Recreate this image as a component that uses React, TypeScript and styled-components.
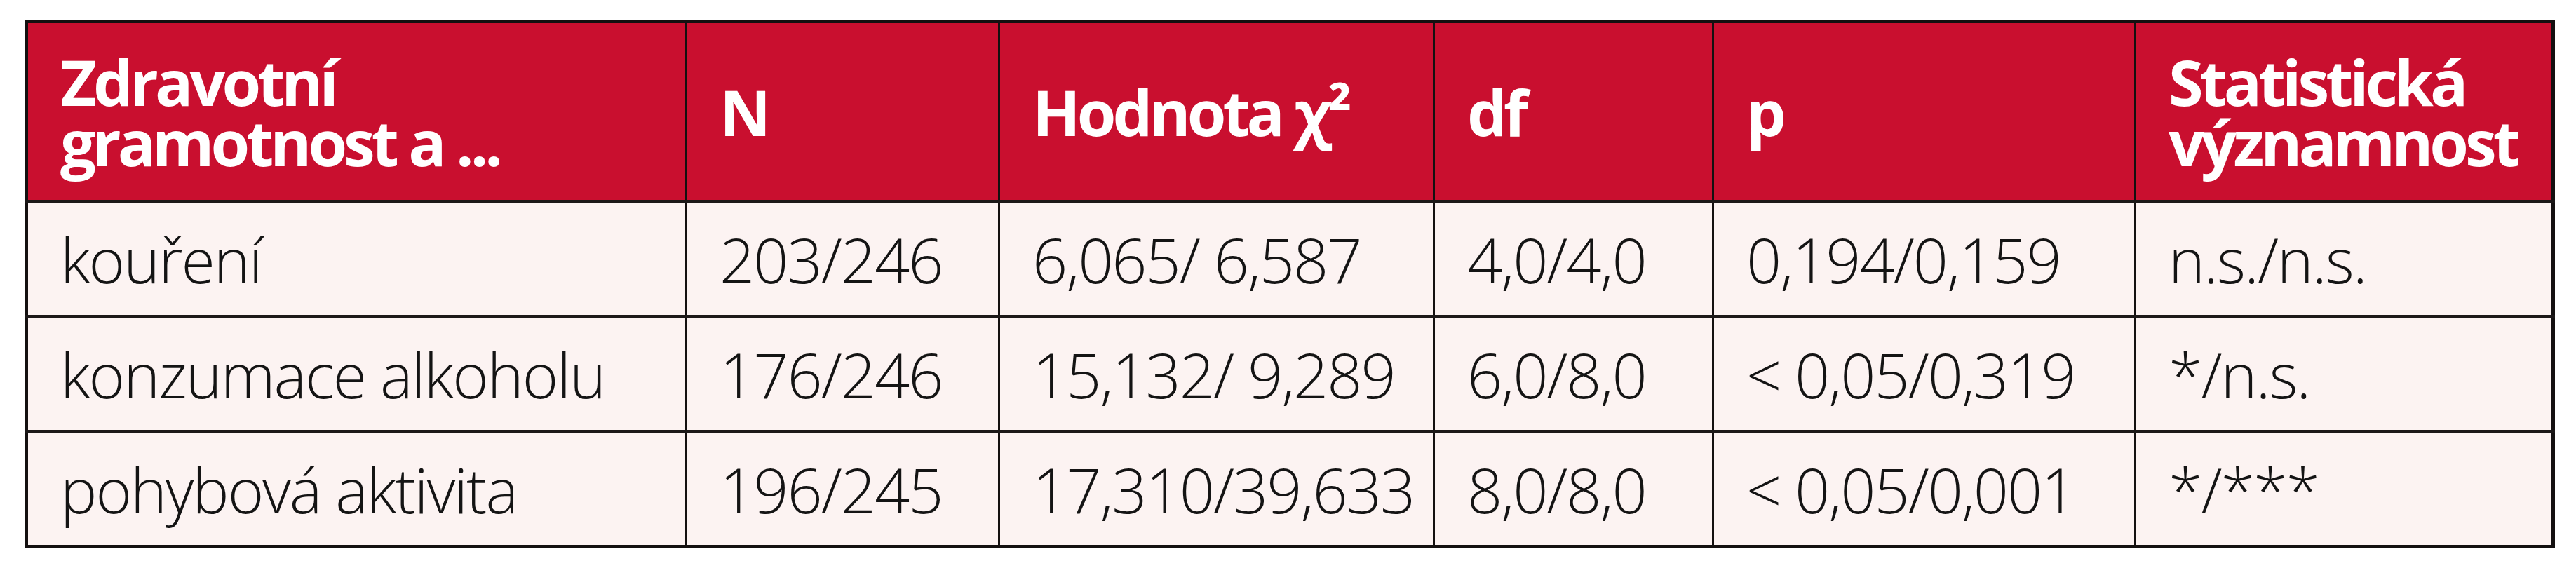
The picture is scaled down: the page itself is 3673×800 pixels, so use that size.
import * as React from 'react';
import styled, { createGlobalStyle } from 'styled-components';

const Global = createGlobalStyle`
  html, body {
    margin: 0;
    padding: 0;
    background: #ffffff;
  }
  *, *::before, *::after {
    box-sizing: border-box;
  }
`;

const Page = styled.div`
  padding: 28px 35px;
  font-family: "Open Sans", "Liberation Sans", sans-serif;
`;

const Table = styled.table`
  width: 3603px;
  border-collapse: collapse;
  table-layout: fixed;
  border: 5px solid #141010;
`;

const HeadRow = styled.tr`
  height: 257px;
  background: #c90f2f;
`;

const BodyRow = styled.tr`
  height: 164px;
  background: #fcf3f2;
  border-top: 5px solid #1c1818;
`;

const HeadCell = styled.th<{ $w: number }>`
  width: ${(p) => p.$w}px;
  padding: 0 16px 0 46px;
  text-align: left;
  vertical-align: middle;
  color: #ffffff;
  font-size: 90px;
  font-weight: 700;
  letter-spacing: -5px;
  line-height: 86px;
  border-left: 3px solid #141010;
`;

const Cell = styled.td`
  padding: 0 16px 0 46px;
  vertical-align: middle;
  color: #141414;
  font-size: 88px;
  font-weight: 300;
  letter-spacing: -2px;
  line-height: 1;
  white-space: nowrap;
  border-left: 3px solid #141010;
`;

const columns: { label: React.ReactNode; w: number }[] = [
  { label: <>Zdravotní<br />gramotnost a ...</>, w: 941 },
  { label: 'N', w: 446 },
  { label: 'Hodnota χ²', w: 620 },
  { label: 'df', w: 398 },
  { label: 'p', w: 602 },
  { label: <>Statistická<br />významnost</>, w: 596 },
];

const rows: string[][] = [
  ['kouření', '203/246', '6,065/ 6,587', '4,0/4,0', '0,194/0,159', 'n.s./n.s.'],
  ['konzumace alkoholu', '176/246', '15,132/ 9,289', '6,0/8,0', '< 0,05/0,319', '*/n.s.'],
  ['pohybová aktivita', '196/245', '17,310/39,633', '8,0/8,0', '< 0,05/0,001', '*/***'],
];

export default function App() {
  return (
    <Page>
      <Global />
      <Table>
        <thead>
          <HeadRow>
            {columns.map((c, i) => (
              <HeadCell key={i} $w={c.w}>{c.label}</HeadCell>
            ))}
          </HeadRow>
        </thead>
        <tbody>
          {rows.map((r, i) => (
            <BodyRow key={i}>
              {r.map((v, j) => (
                <Cell key={j}>{v}</Cell>
              ))}
            </BodyRow>
          ))}
        </tbody>
      </Table>
    </Page>
  );
}
